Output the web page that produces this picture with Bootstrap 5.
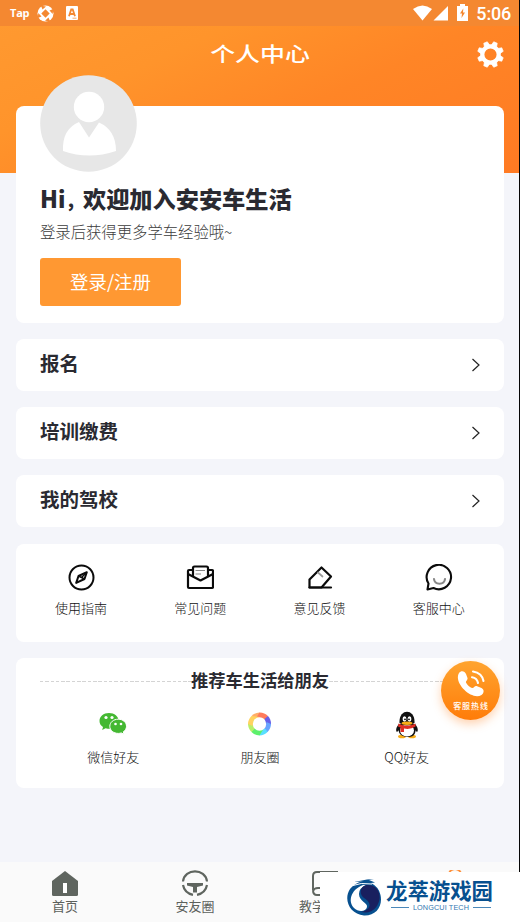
<!DOCTYPE html>
<html lang="zh-CN">
<head>
<meta charset="utf-8">
<meta name="viewport" content="width=device-width, initial-scale=1">
<title>个人中心</title>
<link rel="stylesheet" href="https://cdn.jsdelivr.net/npm/bootstrap@5.3.0/dist/css/bootstrap.min.css">
<style>
body{font-family:"Noto Sans CJK SC","Noto Sans",sans-serif;color:#2a2a31;background:#f4f5fa;line-height:1.2}
svg{display:block;flex:none}
.screen{width:520px;height:922px;background:linear-gradient(155deg,#ff9a31 0%,#ff942b 32%,#ff8526 60%,#ff7a23 100%) 0 0/100% 173px no-repeat #f4f5fa}
.edge{top:0;right:0;width:1px;height:872px;background:#050505}
.status{height:26px;background:#f48831;padding:0 9px 0 10px}
.tap{font:700 11px/1 "Open Sans",sans-serif;letter-spacing:-.2px;margin-top:-2px}
.app-icon{margin-left:12px}
.battery{margin:0 8px 2px 8px}
.clock{font:500 18px/1 Roboto,sans-serif;letter-spacing:-.2px;margin-top:1px}
.title-row{height:80px;padding-top:16px}
.title-row h1{font-size:20px;line-height:24px;font-weight:500;transform:scaleX(1.245)}
.gear{top:14px;right:15px}
.panel{border:0;border-radius:8px;background:#fff;width:488px;margin:0 auto 16px 16px}
.profile{height:217px;padding:0 24px}
.avatar{top:-31px;left:24px}
.hello{font-size:23.2px;font-weight:900;height:30px;line-height:30px;margin:77px 0 0;white-space:nowrap}
.hello .latin{width:43px}
.hello .comma{font-size:18px}
.sub{font-size:15.35px;font-weight:300;color:#3c3c3c;line-height:20px;margin:8px 0 17px}
.login{width:141px;height:48px;background:#ff9832;border:0;border-radius:3px;color:#fff;font-size:18.4px;line-height:46px;padding:0 0 3px;font-weight:400}
.login:hover{background:#ff9832;color:#fff}
.entry{height:52px;padding:0 23px 0 24px;font-size:19.5px;font-weight:700}
.entry span{margin-top:-4px}
.tools{height:98px;padding:20px 5.5px 0;margin-top:17px}
.lbl{font-size:13px;line-height:18px;color:#111;font-weight:300;white-space:nowrap}
.tools .lbl{margin-top:7px}
.share{height:130px;padding:11px 24px 0}
.share .lbl{margin-top:9px}
.share h2{font-size:17.3px;line-height:22px;font-weight:700;margin:0;white-space:nowrap}
.dash{height:1px;margin-top:3px;background:repeating-linear-gradient(90deg,#d4d4d4 0 3.5px,transparent 3.5px 5.3px)}
.hotline{left:441px;top:661px;width:59px;height:59px;background:linear-gradient(#ffa42f,#ff7c09);box-shadow:0 4px 10px #ff8a3060;padding-top:8px}
.hotline span{font-size:8px;font-weight:500;letter-spacing:.9px;line-height:12px;margin:2px 0 0 1px}
.tabs{height:60px;background:#fafafa;padding-top:8px;top:862px;left:0;width:520px}
.tabs .lbl{color:#5c615c;margin-top:1px;font-weight:400}
.tabs .lesson-label{padding-right:26px}
.watermark{left:320px;top:872px;width:200px;height:50px;background:#fff;padding-left:26px}
.brand{color:#07508f;font-size:21.4px;line-height:23px;font-weight:700;white-space:nowrap;margin:-5px 0 0 -1px}
.brand-sub{font:7.300px/8px "Liberation Sans",sans-serif;letter-spacing:.1px;color:#3478b1;width:100px;margin-top:3px;white-space:nowrap}
.brand-sub i{height:1px;background:#4b88b9}
</style>
<script src="https://cdn.jsdelivr.net/npm/bootstrap@5.3.0/dist/js/bootstrap.bundle.min.js"></script>
</head>
<body>
<div class="screen position-relative overflow-hidden">
  <div class="status d-flex align-items-center text-white">
    <span class="tap">Tap</span>
    <svg class="ms-2" width="17" height="17" viewBox="0 0 17 17"><circle cx="8.500" cy="8.500" r="8" fill="#fff"/><g fill="#f48831"><path d="M8.500 4.300L12.700 8.500 8.500 12.700 4.300 8.500z"/><path d="M4 .8L9 1.400 5.500 4.500z"/><path d="M16.200 4l-.5 5-3.200-3.500z"/><path d="M13 16.200l-5-.5 3.500-3.200z"/><path d="M.8 13l.5-5 3.200 3.500z"/></g></svg>
    <svg class="app-icon" width="12" height="14" viewBox="0 0 12 14"><rect width="12" height="14" rx="1" fill="#fff"/><path d="M3 10.300L5.200 3.500h1.500L9 10.300M4 8h4" fill="none" stroke="#f48831" stroke-width="1.800"/><path d="M6.500 12.200h4" stroke="#f48831" stroke-width=".7"/></svg>
    <svg class="ms-auto" width="19" height="16" viewBox="0 0 19 16"><path d="M0 4Q9.500-3 19 4L9.500 15.500z" fill="#fff"/></svg>
    <svg class="ms-0" width="17" height="16" viewBox="0 0 17 16"><path d="M1.500 15.500L16 1v14.500z" fill="#fff"/></svg>
    <svg class="battery" width="11" height="17" viewBox="0 0 11 17"><path d="M0 2h3V0h5v2h3v15H0z" fill="#fff"/><path d="M6.300 4.500L3 9.500h2L4.500 14 8 8.600H6z" fill="#f48831"/></svg>
    <span class="clock">5:06</span>
  </div>
  <header class="title-row d-flex justify-content-center text-white position-relative">
    <h1 class="m-0">个人中心</h1>
    <svg class="gear position-absolute" width="29" height="29" viewBox="-14.500 -14.500 29 29"><circle r="8.200" fill="none" stroke="#fff" stroke-width="4.200"/><g fill="#fff" stroke="#fff" stroke-width=".6" stroke-linejoin="round"><g id="teeth"><path id="tooth" d="M-2.800-9L-1.900-13h3.800l.9 4z" transform="rotate(22.500)"/><use href="#tooth" transform="rotate(45)"/><use href="#tooth" transform="rotate(90)"/><use href="#tooth" transform="rotate(135)"/></g><use href="#teeth" transform="rotate(180)"/></g></svg>
  </header>

  <section class="card panel profile align-items-start position-relative">
    <svg class="avatar position-absolute" width="97" height="97" viewBox="0 0 97 97"><circle cx="48.500" cy="48.500" r="48.300" fill="#e7e7e7"/><circle cx="49" cy="32" r="15.200" fill="#fff"/><path d="M39 47L49 62.500 59 47.500Q76 55 76 76Q49 85 23 76Q22 54 39 47z" fill="#fff"/></svg>
    <h2 class="hello d-flex"><span class="latin">Hi<span class="comma">，</span></span>欢迎加入安安车生活</h2>
    <p class="sub">登录后获得更多学车经验哦~</p>
    <button class="btn login">登录/注册</button>
  </section>

  <a class="card panel entry flex-row align-items-center justify-content-between text-reset text-decoration-none"><span>报名</span><svg width="10" height="14" viewBox="0 0 10 14"><path d="M1.500 1l6.500 6-6.500 6" fill="none" stroke="#222" stroke-width="1.200"/></svg></a>
  <a class="card panel entry flex-row align-items-center justify-content-between text-reset text-decoration-none"><span>培训缴费</span><svg width="10" height="14" viewBox="0 0 10 14"><path d="M1.500 1l6.500 6-6.500 6" fill="none" stroke="#222" stroke-width="1.200"/></svg></a>
  <a class="card panel entry flex-row align-items-center justify-content-between text-reset text-decoration-none"><span>我的驾校</span><svg width="10" height="14" viewBox="0 0 10 14"><path d="M1.500 1l6.500 6-6.500 6" fill="none" stroke="#222" stroke-width="1.200"/></svg></a>

  <section class="card panel tools">
    <div class="row g-0 text-center">
      <div class="col d-flex flex-column align-items-center"><svg width="28" height="28" viewBox="0 0 28 28" fill="none" stroke="#0b0b0b" stroke-width="2" stroke-linejoin="round"><circle cx="14.500" cy="13.500" r="12"/><path d="M19.800 8.200L17.500 15 9.200 18.900 11.500 12z"/><path d="M11.500 12l6 3M14.500 13.500l5-5" stroke-width="1.500"/></svg><span class="lbl">使用指南</span></div>
      <div class="col d-flex flex-column align-items-center"><svg width="28" height="28" viewBox="0 0 28 28" fill="none" stroke="#0b0b0b" stroke-width="2.200" stroke-linejoin="round"><path d="M7 6H3Q2 6 2 7V23Q2 24 3 24H26Q27 24 27 23V7Q27 6 26 6H22"/><path d="M2 10L14.500 16.500 27 10"/><path d="M7 12V4Q7 2.500 8.500 2.500H20.500Q22 2.500 22 4V12"/><path d="M9.500 6.500H19M9.500 10H15" stroke="#888" stroke-width="1.200"/></svg><span class="lbl">常见问题</span></div>
      <div class="col d-flex flex-column align-items-center"><svg width="28" height="28" viewBox="0 0 28 28" fill="none" stroke="#0b0b0b" stroke-width="2.200" stroke-linejoin="round" stroke-linecap="round"><path d="M15.500 3.500L25 12.500 15.500 23.500H3.500V15.500z"/><path d="M3.500 23.500H25"/><path d="M12 8.500l4.500 4" stroke="#999" stroke-width="1.700"/></svg><span class="lbl">意见反馈</span></div>
      <div class="col d-flex flex-column align-items-center"><svg width="28" height="28" viewBox="0 0 28 28" fill="none" stroke="#0b0b0b" stroke-width="2.100" stroke-linejoin="round" stroke-linecap="round"><path d="M2.500 25.500L3.500 19.500A12.200 12.200 0 1 1 8.500 24z"/><path d="M9 15Q9.500 19.700 14.500 19.700T20 15" stroke="#888"/></svg><span class="lbl">客服中心</span></div>
    </div>
  </section>

  <section class="card panel share">
    <div class="d-flex align-items-center"><div class="dash flex-fill"></div><h2>推荐车生活给朋友</h2><div class="dash flex-fill"></div></div>
    <div class="row g-0 text-center pt-3">
      <div class="col d-flex flex-column align-items-center pt-1"><svg width="28" height="28" viewBox="0 0 28 28"><g fill="#44b832"><path d="M10 2C4.500 2 .5 5.500.5 10c0 2.500 1.200 4.600 3.500 6l-.8 3 3.400-1.700c8 2.200 13-2.300 13-7.300C19.600 5.300 15.500 2 10 2z"/><path d="M19.300 8.200c-4.800 0-8.500 3.100-8.500 7.100s3.700 7.100 8.500 7.100c1 0 2-.2 3-.5l2.700 1.400-.7-2.500c2.100-1.300 3.200-3.300 3.200-5.500 0-4-3.700-7.100-8.200-7.100z" stroke="#fff"/></g><g fill="#fff"><circle cx="7" cy="6.500" r="1.600"/><circle cx="13" cy="6.500" r="1.600"/><circle cx="16.500" cy="13" r="1.300"/><circle cx="22" cy="13" r="1.300"/></g></svg><span class="lbl">微信好友</span></div>
      <div class="col d-flex flex-column align-items-center pt-1"><svg width="28" height="28" viewBox="-13.500 -13 28 28"><g><path d="M-8-8A11.500 11.500 0 0 1 0-11.500L7-5H-5z" fill="#ffad68"/><path d="M0-11.500A11.500 11.500 0 0 1 8.500-8L7 0 4-6-4-5z" fill="#ff7b5c"/><path d="M8.500-8A11.500 11.500 0 0 1 11.500 0L5 6V-5z" fill="#6860e8"/><path d="M11.500 0A11.500 11.500 0 0 1 8 8L0 7 6 3 7-2z" fill="#68a4ff"/><path d="M8 8A11.500 11.500 0 0 1 0 11.500L-6 5H6z" fill="#58dfff"/><path d="M0 11.500A11.500 11.500 0 0 1-8 8L-6 2-2 6 4 5z" fill="#5df06b"/><path d="M-8 8A11.500 11.500 0 0 1-11.500 0L-5-6V5z" fill="#b9ef68"/><path d="M-11.500 0A11.500 11.500 0 0 1-8-8L0-7-6-3-7 2z" fill="#ffd360"/></g><circle r="6.700" fill="#fff"/></svg><span class="lbl">朋友圈</span></div>
      <div class="col d-flex flex-column align-items-center pt-1"><svg width="28" height="28" viewBox="0 0 28 28"><path d="M6 13C3 16 2.500 20 4 21l3-3M22 13c3 3 3.500 7 2 8l-3-3" fill="#111"/><ellipse cx="9" cy="25.500" rx="4" ry="1.800" fill="#f9ad16"/><ellipse cx="19" cy="25.500" rx="4" ry="1.800" fill="#f9ad16"/><path d="M6 13Q3 25 14 26T22 13z" fill="#111"/><ellipse cx="14" cy="19.500" rx="7" ry="6" fill="#fff"/><path d="M6.500 12C5.500-3 22.500-3 21.500 12Q14 17 6.500 12z" fill="#111"/><ellipse cx="11.500" cy="8" rx="1.900" ry="2.700" fill="#fff"/><ellipse cx="16.500" cy="8" rx="1.900" ry="2.700" fill="#fff"/><circle cx="12" cy="8.300" r=".9"/><circle cx="16" cy="8.300" r=".9"/><path d="M5.500 12.500Q14 17 22.500 12.500V15.500Q17 19 11 17.500V21H7.500V16.500L5 15.500z" fill="#df2e25"/><ellipse cx="14" cy="12.200" rx="5.500" ry="1.700" fill="#f9ad16"/></svg><span class="lbl">QQ好友</span></div>
    </div>
  </section>

  <div class="hotline position-absolute rounded-circle text-white d-flex flex-column align-items-center">
    <svg width="30" height="29" viewBox="0 0 30 29"><path d="M3 4C5 1 9 2 10 5L11.500 9C12 11 9.500 12 10 13.500 11 16 14 18.500 16 19 18 19.300 18.500 16.500 20.500 17L25.500 19C29 21 27.500 24.500 25.500 26 16 32-3 14 3 4z" fill="#fff"/><path d="M16 8.200Q21 9 22 14M17 2.500Q26 4 27.500 12" fill="none" stroke="#fff" stroke-width="2.100" stroke-linecap="round"/></svg>
    <span>客服热线</span>
  </div>

  <nav class="tabs position-absolute row g-0 text-center">
    <div class="col d-flex flex-column align-items-center"><svg width="28" height="26" viewBox="0 0 28 26"><path d="M14 1L27 11V24.500Q27 26 25.500 26H2.500Q1 26 1 24.500V11z" fill="#5f655f"/><path d="M12 13h4v10h-4z" fill="#fff"/></svg><span class="lbl">首页</span></div>
    <div class="col d-flex flex-column align-items-center"><svg width="28" height="26" viewBox="-.5 0 28 26" fill="none" stroke="#5f655f" stroke-width="2.200"><path d="M1.500 11.500C3-2 24-2 25.500 11.500M1.500 15Q3 23 11.500 24.800M25.500 15Q24 23 15.500 24.800"/><path d="M5.500 13H21.500V15.500L15.500 17V22.500H11.500V17L5.500 15.500z" fill="#5f655f" stroke="none"/></svg><span class="lbl">安友圈</span></div>
    <div class="col d-flex flex-column align-items-center"><svg width="28" height="26" viewBox="0 0 28 26" fill="none" stroke="#5f655f" stroke-width="2"><path d="M26 20V2H6Q2 2 2 6V20Q2 25 6 25H26M2 21Q3 18 7 18H26"/></svg><span class="lbl lesson-label">教学</span></div>
    <div class="col d-flex flex-column align-items-center"><svg width="28" height="26" viewBox="0 0 28 26" fill="none" stroke="#ff903a" stroke-width="2"><circle cx="14" cy="5.500" r="6.500"/></svg></div>
  </nav>

  <div class="edge position-absolute"></div>

  <div class="watermark position-absolute d-flex align-items-center">
    <svg width="37" height="38" viewBox="0 0 37 38"><path d="M17 3.500Q9 4.500 4 11C-3 22 4 36 18 37.500 30 38 37 28 34.500 17Q33 9 25 5L29 4.500 23 2 28 1 21 1.500 8 4z" fill="#07508f"/><path d="M17 7C4 12 2 24 8 30 12 34 20 34 21 29 22 25 13 23 13 16Q13 10 20 7z" fill="#fff"/><path d="M22 7C33 7 37 19 31 28 26 35 20 35 15 34 27 31 25 24 18 20 12 15 15 7 22 7z" fill="#19205f"/><path d="M5 8Q15 4 26 6" fill="none" stroke="#fff" stroke-width="1"/></svg>
    <div class="ms-1"><div class="brand">龙萃游戏园</div><div class="brand-sub d-flex align-items-center gap-1 ms-1"><i class="flex-fill"></i>LONGCUI TECH<i class="flex-fill"></i></div></div>
  </div>
</div>
</body>
</html>
